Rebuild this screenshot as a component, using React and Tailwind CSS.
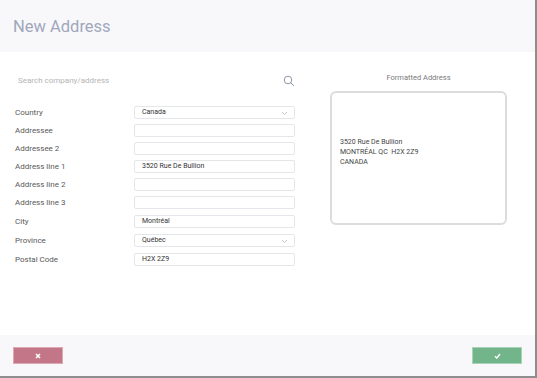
import React from 'react';

const Chevron = () => (
  <svg width="7" height="5" viewBox="0 0 7 5" className="absolute right-[6px] top-[4px]">
    <path d="M1 1 L3.5 3.5 L6 1" fill="none" stroke="#b5b5b5" strokeWidth="0.8" />
  </svg>
);

const Row = ({ label, value, select, extra }) => (
  <div className={"flex items-center h-[13px] " + (extra ? "mt-[1px]" : "")}>
    <div className="w-[119px] text-[8px] text-[#5a5a5a] leading-none">{label}</div>
    <div className="relative w-[161px] h-[13px] border border-[#e4e6ea] rounded-[2px] bg-white flex items-center pl-[7px]">
      <span className="text-[7px] text-[#333] leading-none">{value}</span>
      {select && <Chevron />}
    </div>
  </div>
);

const fields = [
  { label: 'Country', value: 'Canada', select: true },
  { label: 'Addressee', value: '' },
  { label: 'Addressee 2', value: '' },
  { label: 'Address line 1', value: '3520 Rue De Bullion' },
  { label: 'Address line 2', value: '' },
  { label: 'Address line 3', value: '' },
  { label: 'City', value: 'Montréal', extra: true },
  { label: 'Province', value: 'Québec', select: true, extra: true },
  { label: 'Postal Code', value: 'H2X 2Z9', extra: true },
];

export default function App() {
  return (
    <div className="w-[537px] h-[378px] flex flex-col bg-white border-r-2 border-b-2 border-[#8e8e8e] font-['Roboto',sans-serif]">
      {/* Header */}
      <div className="h-[52px] shrink-0 bg-[#f8f8fb] flex items-center px-[13px] pt-[2px]">
        <h1 className="text-[16.5px] text-[#a0a7bb] leading-none">New Address</h1>
      </div>

      {/* Body */}
      <div className="flex-1 flex">
        <div className="w-[310px] pt-[22px]">
          <div className="flex items-center justify-between h-[14px] pl-[18px] pr-[15px]">
            <span className="text-[8px] text-[#b4b4b4] leading-none">Search company/address</span>
            <svg width="12" height="12" viewBox="0 0 12 12">
              <circle cx="5" cy="5" r="3.8" fill="none" stroke="#8d95a3" strokeWidth="1" />
              <path d="M7.8 7.8 L10.8 10.8" stroke="#8d95a3" strokeWidth="1" strokeLinecap="round" />
            </svg>
          </div>
          <div className="flex flex-col gap-[5px] pl-[15px] mt-[18px]">
            {fields.map((f) => (
              <Row key={f.label} {...f} />
            ))}
          </div>
        </div>

        <div className="w-[177px] ml-[20px] pt-[21px] flex flex-col">
          <div className="h-[10px] text-[7.5px] text-[#7a7a7a] leading-[10px] text-center">Formatted Address</div>
          <div className="mt-[8px] h-[134px] border-2 border-[#dcdcdc] rounded-[6px] pt-[44px] pl-[8px] text-[7px] leading-[10px] text-[#444]">
            <div>3520 Rue De Bullion</div>
            <div>MONTRÉAL QC&nbsp;&nbsp;H2X 2Z9</div>
            <div>CANADA</div>
          </div>
        </div>
      </div>

      {/* Footer */}
      <div className="h-[41px] shrink-0 bg-[#f8f8fb] flex items-center justify-between px-[13px]">
        <button className="w-[50px] h-[17px] bg-[#c27687] border border-[#dba8b3] flex items-center justify-center">
          <svg width="6" height="6" viewBox="0 0 6 6">
            <path d="M1 1 L5 5 M5 1 L1 5" stroke="white" strokeWidth="1.6" />
          </svg>
        </button>
        <button className="w-[50px] h-[17px] bg-[#72b58b] border border-[#a8d3b8] flex items-center justify-center">
          <svg width="7" height="6" viewBox="0 0 7 6">
            <path d="M1 3.2 L2.8 5 L6 1" fill="none" stroke="white" strokeWidth="1.4" />
          </svg>
        </button>
      </div>
    </div>
  );
}
